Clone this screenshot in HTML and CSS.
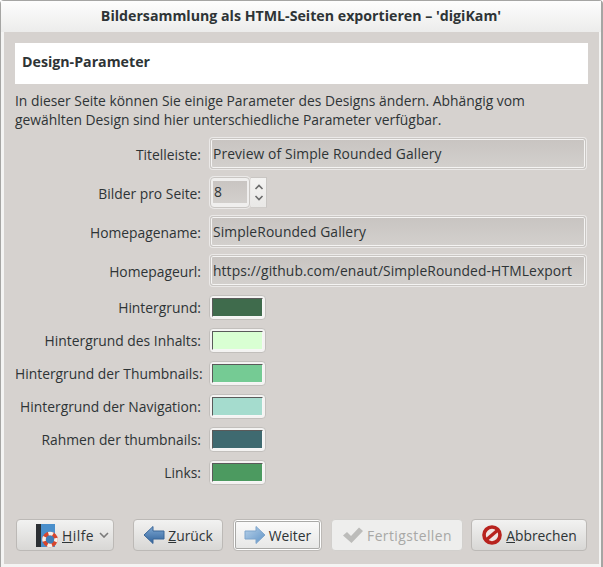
FILE: index.html
```html
<!DOCTYPE html>
<html lang="de">
<head>
<meta charset="utf-8">
<title>digiKam</title>
<link rel="stylesheet" href="styles.css">
</head>
<body>
<div class="window">
  <div class="titlebar">Bildersammlung als HTML-Seiten exportieren – 'digiKam'</div>
  <div class="content">
    <div class="banner">Design-Parameter</div>
    <p class="intro">In dieser Seite können Sie einige Parameter des Designs ändern. Abhängig vom gewählten Design sind hier unterschiedliche Parameter verfügbar.</p>
    <div class="form fields">
      <label class="lbl">Titelleiste:</label>
      <div class="entry">Preview of Simple Rounded Gallery</div>
      <label class="lbl">Bilder pro Seite:</label>
      <div class="spin">
        <div class="spin-entry"><span class="spin-value">8</span></div>
        <div class="spin-btns">
          <svg class="spin-arrow" viewBox="0 0 10 6"><path d="M1.5 5 5 1.5 8.500 5"/></svg>
          <svg class="spin-arrow" viewBox="0 0 10 6"><path d="M1.500 1 5 4.500 8.500 1"/></svg>
        </div>
      </div>
      <label class="lbl">Homepagename:</label>
      <div class="entry">SimpleRounded Gallery</div>
      <label class="lbl">Homepageurl:</label>
      <div class="entry">https://github.com/enaut/SimpleRounded-HTMLexport</div>
    </div>
    <div class="form colors">
      <label class="lbl">Hintergrund:</label>
      <div class="swatch"><span class="fill c1"></span></div>
      <label class="lbl">Hintergrund des Inhalts:</label>
      <div class="swatch"><span class="fill c2"></span></div>
      <label class="lbl">Hintergrund der Thumbnails:</label>
      <div class="swatch"><span class="fill c3"></span></div>
      <label class="lbl">Hintergrund der Navigation:</label>
      <div class="swatch"><span class="fill c4"></span></div>
      <label class="lbl">Rahmen der thumbnails:</label>
      <div class="swatch"><span class="fill c5"></span></div>
      <label class="lbl">Links:</label>
      <div class="swatch"><span class="fill c6"></span></div>
    </div>
    <div class="actions">
      <button class="btn b-help">
        <svg class="ico-help" viewBox="0 0 24 24">
          <rect x="0" y="0" width="5" height="23" fill="#2b2f33"/>
          <rect x="5" y="0" width="14" height="23" fill="#4a8fcb"/>
          <circle cx="14" cy="15.500" r="6" fill="#3f7eb8" stroke="#d8452c" stroke-width="3.600"/>
          <circle cx="14" cy="15.500" r="6" fill="none" stroke="#f6f0ea" stroke-width="3.600" stroke-dasharray="4.700 4.700" stroke-dashoffset="2.300"/>
        </svg>
        <span class="lab"><u>H</u>ilfe</span>
        <svg class="chev" viewBox="0 0 10 6"><path d="M1 1l4 4 4-4"/></svg>
      </button>
      <button class="btn b-back">
        <svg class="ico" viewBox="0 0 22 20">
          <defs><linearGradient id="gb" x1="0" y1="0" x2="0" y2="1"><stop offset="0" stop-color="#7fa9d4"/><stop offset="1" stop-color="#2f6199"/></linearGradient></defs>
          <path d="M1 10 10 1.500v4.500h11v8H10v4.500z" fill="url(#gb)" stroke="#3a6698"/>
        </svg>
        <span class="lab"><u>Z</u>urück</span>
      </button>
      <button class="btn b-next">
        <svg class="ico" viewBox="0 0 22 20">
          <defs><linearGradient id="gn" x1="0" y1="0" x2="1" y2="1"><stop offset="0" stop-color="#b9d2ea"/><stop offset="1" stop-color="#5f93c6"/></linearGradient></defs>
          <path d="M21 10 12 1.500v4.500H1v8h11v4.500z" fill="url(#gn)" stroke="#7fa5cc"/>
        </svg>
        <span class="lab">Weiter</span>
      </button>
      <button class="btn b-done" disabled>
        <svg class="ico" viewBox="0 0 22 20"><path d="M1 10.500 5 7l4 4 8-8.500 4 3.500L9.500 18z" fill="#bcbcba"/></svg>
        <span class="lab">Fertigstellen</span>
      </button>
      <button class="btn b-cancel">
        <svg class="ico" viewBox="0 0 22 22">
          <circle cx="11" cy="11" r="8.800" fill="#f0e6e4" stroke="#b8231e" stroke-width="4"/>
          <path d="M4.500 16.500 17.500 5.500" stroke="#b8231e" stroke-width="3.600"/>
        </svg>
        <span class="lab"><u>A</u>bbrechen</span>
      </button>
    </div>
  </div>
</div>
</body>
</html>
```
FILE: styles.css
```css
* { box-sizing: border-box; }
html, body { margin: 0; padding: 0; }
body {
  width: 603px;
  height: 567px;
  overflow: hidden;
  background: #fff;
  font-family: "Open Sans", sans-serif;
  font-size: 13.85px;
  color: #2e3436;
}
.window {
  width: 603px;
  height: 567px;
  display: flex;
  flex-direction: column;
  border-top: 1px solid #a5a5a3;
  border-left: 1px solid #a5a5a3;
  border-right: 2px solid #a5a5a3;
  border-radius: 4px 4px 0 0;
  background: #f4f4f3;
  padding: 0 2px 3px 3px;
}
.titlebar {
  height: 31px;
  flex: none;
  margin: 0 -2px 0 -3px;
  background: linear-gradient(#fdfdfd, #ececeb);
  text-align: center;
  line-height: 30px;
  font-weight: 700;
  font-size: 14.2px;
}
.content {
  flex: 1;
  background: #d6d2cf;
  padding: 11px 11px 13px;
  display: flex;
  flex-direction: column;
}
.banner {
  height: 41px;
  flex: none;
  background: #fff;
  padding-left: 7px;
  line-height: 37px;
  font-weight: 700;
  font-size: 14.2px;
}
.intro {
  margin: 7px 0 9px;
  line-height: 19px;
}
.form {
  display: grid;
  grid-template-columns: 186px 376px;
  column-gap: 9px;
  row-gap: 8px;
  align-items: center;
}
.colors { margin-top: 9px; }
.lbl { text-align: right; white-space: nowrap; }
.fields .lbl { padding-top: 1px; }
.entry {
  height: 31px;
  padding-left: 2px;
  line-height: 30px;
  letter-spacing: 0.1px;
  background: linear-gradient(#c8c4c1, #d3d0cd);
  border: 1px solid #c9c6c3;
  border-radius: 3px;
  box-shadow: 0 0 0 1px #ebe9e8, inset 0 0 0 1px #f5f4f3;
  white-space: nowrap;
  overflow: hidden;
}
.spin { display: flex; height: 31px; }
.spin-entry {
  width: 40px;
  height: 31px;
  padding: 3px 2px 4px;
  line-height: 22px;
  background: #f0efee;
  border: 1px solid #c9c6c3;
  border-radius: 4px;
  box-shadow: 0 0 0 1px #ebe9e8;
}
.spin-value {
  display: block;
  height: 22px;
  padding-left: 1px;
  background: linear-gradient(#c9c5c2, #d3d0cd);
}
.spin-btns {
  width: 16px;
  margin-left: 1px;
  display: flex;
  flex-direction: column;
  justify-content: space-around;
  align-items: center;
  padding: 3px 0;
  background: linear-gradient(#f4f3f2, #e9e8e6);
  border-top: 1px solid #c9c6c3;
  border-right: 1px solid #c9c6c3;
  border-bottom: 1px solid #d0cdca;
}
.spin-arrow { width: 10px; height: 6px; fill: none; stroke: #6b6b6b; stroke-width: 1.600; }
.swatch {
  width: 57px;
  height: 25px;
  margin-left: -1px;
  padding: 2px;
  background: #f4f3f2;
  border: 1px solid #c2bfbc;
  border-radius: 4px;
  display: flex;
}
.fill {
  flex: 1;
  border-top: 1px solid #5a5a5a;
  border-left: 1px solid #5a5a5a;
  border-right: 1px solid #f6f6f6;
  border-bottom: 1px solid #f6f6f6;
}
.c1 { background: #3f6b4c; }
.c2 { background: #d9ffd3; }
.c3 { background: #75cb94; }
.c4 { background: #a5dcce; }
.c5 { background: #3f6a70; }
.c6 { background: #4c9a60; }
.actions {
  margin-top: auto;
  padding: 0 1px;
  display: flex;
}
.btn {
  height: 32px;
  padding: 0;
  display: flex;
  align-items: center;
  justify-content: center;
  gap: 3px;
  font: inherit;
  color: #2e3436;
  background: linear-gradient(#f2f2f1, #d8d7d5);
  border: 1px solid #bcb9b6;
  border-radius: 4px;
}
.ico { width: 22px; height: 20px; flex: none; }
.ico-help { width: 24px; height: 24px; flex: none; margin-top: 2px; }
.chev { width: 10px; height: 6px; margin-left: 3px; fill: none; stroke: #7a7a7a; stroke-width: 1.600; }
.b-help {
  width: 98px;
  margin-right: 19px;
  justify-content: flex-start;
  padding-left: 19px;
  gap: 2px;
}
.b-help .lab { letter-spacing: 0.5px; }
.b-back { width: 90px; margin-right: 10px; }
.b-next {
  width: 89px;
  margin-right: 9px;
  background: linear-gradient(#fbfbfb, #e6e6e5);
  box-shadow: inset 0 0 0 1px #fff, inset 0 0 0 2px #a9a9a7;
}
.b-done { width: 132px; margin-right: 8px; color: #a8a8a6; background: #eeeeed; border-color: #d2d0cd; }
.b-done .lab { letter-spacing: 0.45px; }
.b-cancel { width: 116px; }
```
